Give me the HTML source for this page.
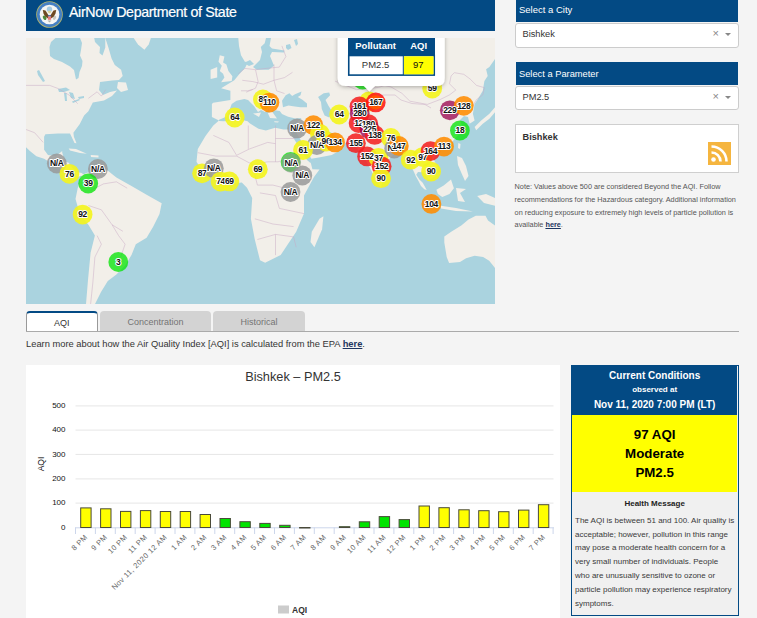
<!DOCTYPE html>
<html><head><meta charset="utf-8">
<style>
*{margin:0;padding:0;box-sizing:border-box}
html,body{width:757px;height:618px;overflow:hidden;background:#f4f4f4;font-family:"Liberation Sans",sans-serif;color:#333}
.abs{position:absolute}
#hdr{left:26px;top:0;width:469px;height:31px;background:#034a84}
#hdr .t{position:absolute;left:43px;top:2.5px;font-size:14.2px;letter-spacing:-0.35px;color:#fff;line-height:18px;white-space:nowrap;-webkit-text-stroke:0.2px #fff}
#map{left:26px;top:38px;width:469px;height:266px;overflow:hidden;background:#aad3df}
.sh{left:516px;width:222px;height:22px;background:#034a84;color:#fff;font-size:9.5px;padding-left:3px;line-height:19.5px}
.sb{left:515px;width:224px;height:24.5px;background:#fff;border:1px solid #ccc;border-radius:3px;font-size:9.25px;color:#333;padding-left:6.5px;line-height:20px}
.sb .x{position:absolute;left:196.5px;top:-1.2px;color:#888;font-size:11px}
.sb .ar{position:absolute;left:209px;top:9.3px;width:0;height:0;border-left:3.2px solid transparent;border-right:3.2px solid transparent;border-top:3.5px solid #888}
#info{left:515px;top:124px;width:224px;height:49px;background:#fff;border:1.5px solid #cfcfcf}
#info .n{position:absolute;left:6.5px;top:6.6px;font-size:9.2px;font-weight:bold;color:#333}
#rss{left:708px;top:142px;width:23px;height:23px;background:#f5b53f}
#note{left:514.6px;top:181px;width:225px;font-size:7.3px;line-height:12.8px;color:#555}
#note b{color:#1d3560;text-decoration:underline}
.tab{top:311px;height:21px;font-size:9px;text-align:center;line-height:20px;border-radius:4px 4px 0 0}
#t1{left:26px;width:71.5px;background:#fff;border:1px solid #999;border-top:2px solid #034a84;border-bottom:none;color:#333}
#t2{left:100px;width:111px;background:#d3d3d3;color:#737373;line-height:23.5px}
#t3{left:213px;width:92px;background:#d3d3d3;color:#737373;line-height:23.5px}
#tline{left:26px;top:331px;width:713px;height:1px;background:#aaa}
#learn{left:26px;top:338.6px;font-size:9.33px;line-height:11px;color:#333;white-space:nowrap}
#learn u{color:#1d3560;font-weight:bold}
#chart{left:26px;top:365px;width:533.5px;height:253px;background:#fff}
#cc{left:571px;top:365px;width:168.3px;height:251px;border:1.5px solid #034a84;background:#f0f0f0}
#cch{position:absolute;left:0;top:0;width:165.3px;height:49px;background:#034a84;color:#fff;text-align:center;font-weight:bold}
#ccy{position:absolute;left:0;top:49px;width:165.3px;height:77px;background:#ff0;text-align:center;color:#000;font-size:13.3px;font-weight:bold;line-height:18.9px;padding-top:11.1px}
#hm{position:absolute;left:0;top:126px;width:165.3px;text-align:center;font-weight:bold;font-size:8px;color:#222;padding-top:6.5px}
#hmt{position:absolute;left:3px;top:147.6px;width:166px;white-space:nowrap;font-size:8px;line-height:13.9px;color:#3a3a3a}
</style></head><body>
<div id="hdr" class="abs">
<svg class="abs" style="left:10px;top:1px" width="28" height="28" viewBox="0 0 28 28">
<circle cx="13.5" cy="13.5" r="13.3" fill="#b5b66c"/>
<circle cx="13.5" cy="13.5" r="12.5" fill="#4580c4"/>
<circle cx="13.5" cy="13.5" r="9.8" fill="#f6f6f4"/>
<circle cx="13.5" cy="8.3" r="2.7" fill="#a6cce4"/>
<path d="M6.8 9 L9.5 9.4 L12.6 14.5 L12.2 17.5 L9.2 15.8 L7.5 12.5Z" fill="#6e4a22"/>
<path d="M20.2 9 L17.5 9.4 L14.4 14.5 L14.8 17.5 L17.8 15.8 L19.5 12.5Z" fill="#6e4a22"/>
<path d="M11.5 11 L13.5 12.5 L15.5 11 L14.5 9.8 L12.5 9.8Z" fill="#d8d49a"/>
<rect x="11.9" y="14.2" width="3.2" height="1.3" fill="#3d5c9c"/>
<rect x="11.9" y="15.5" width="3.2" height="3.3" fill="#e67a7a"/>
<ellipse cx="8.6" cy="16.8" rx="1.6" ry="2.4" fill="#4e8a3c" transform="rotate(-30 8.6 16.8)"/>
<ellipse cx="18.6" cy="16.8" rx="1.4" ry="2.2" fill="#c8c8c0" transform="rotate(30 18.6 16.8)"/>
<path d="M11.5 19.5 L13.5 21.5 L15.5 19.5Z" fill="#b0b0a8"/>
</svg>
<div class="t">AirNow Department of State</div>
</div>
<div id="map" class="abs"><svg width="469" height="266" viewBox="26 38 469 266" style="display:block"><path d="M26.0 38.0 L105.3 38.0 L108.4 47.5 L111.6 58.6 L114.8 65.0 L121.1 69.7 L122.7 76.0 L119.0 80.0 L112.0 80.5 L100.0 82.0 L99.0 90.0 L103.0 95.0 L110.0 92.0 L117.0 90.5 L112.0 96.0 L104.0 100.4 L92.8 102.6 L88.4 111.2 L84.1 115.5 L79.8 124.1 L73.4 132.7 L73.9 136.8 L76.5 143.3 L74.5 143.0 L70.0 133.5 L58.0 133.5 L45.4 134.2 L44.1 136.8 L44.1 149.8 L48.0 155.0 L55.8 156.2 L62.2 151.1 L62.2 152.4 L64.8 161.4 L68.7 162.7 L75.2 171.8 L81.7 173.1 L84.0 175.0 L80.4 176.0 L77.8 177.0 L67.4 174.4 L59.7 167.9 L50.6 162.7 L44.1 158.8 L36.4 156.2 L29.9 151.1 L26.0 147.2Z" fill="#f2efe9"/>
<path d="M49.5 47.0 L51.0 42.0 L55.5 38.0 L80.0 38.0 L82.0 43.0 L81.0 50.0 L80.0 55.4 L82.5 61.0 L82.0 66.0 L79.5 72.0 L78.5 78.0 L76.0 79.5 L74.0 70.0 L70.0 66.5 L62.0 62.0 L54.0 59.0 L50.0 56.0Z" fill="#aad3df"/>
<path d="M94.2 38.0 L105.3 38.0 L105.3 47.5 L102.5 55.4 L99.5 53.0 L100.0 47.0 L95.0 42.0Z" fill="#aad3df"/>
<path d="M37.0 71.0 L39.0 70.0 L45.0 81.0 L43.0 82.0 L38.0 75.0Z" fill="#aad3df"/>
<path d="M118.0 82.0 L126.0 82.5 L128.0 90.0 L121.0 92.0 L117.0 88.0Z" fill="#f2efe9"/>
<path d="M58.0 89.0 L66.0 87.5 L70.0 90.0 L64.0 92.0 L59.0 92.0Z" fill="#aad3df"/>
<path d="M64.0 93.0 L66.5 93.0 L67.0 101.0 L65.0 101.0Z" fill="#aad3df"/>
<path d="M69.0 92.0 L73.0 93.0 L75.0 99.0 L71.0 98.0Z" fill="#aad3df"/>
<path d="M72.0 101.5 L79.0 99.0 L80.0 100.0 L73.0 103.0Z" fill="#aad3df"/>
<path d="M78.0 97.0 L84.0 96.0 L84.0 98.0 L79.0 99.0Z" fill="#aad3df"/>
<path d="M77.7 188.2 L81.7 175.0 L88.0 172.5 L95.9 171.8 L106.0 169.2 L116.4 177.5 L131.5 186.0 L146.6 194.7 L161.7 203.3 L159.5 214.0 L153.0 227.0 L146.6 237.8 L135.8 244.2 L131.5 255.0 L125.0 265.7 L116.4 274.4 L107.8 281.0 L101.0 292.0 L95.0 304.0 L86.0 304.0 L88.0 280.0 L90.6 252.8 L94.9 235.6 L88.4 224.8 L79.8 214.0 L75.5 199.0Z" fill="#f2efe9"/>
<path d="M133.7 38.0 L150.9 38.0 L148.7 44.5 L144.4 49.8 L138.0 44.5Z" fill="#f2efe9"/>
<path d="M238.3 38.0 L495.0 38.0 L495.0 59.0 L489.4 67.0 L486.1 69.3 L487.7 75.9 L484.4 80.9 L482.8 90.7 L477.9 99.0 L474.6 104.0 L472.9 113.8 L474.6 120.4 L469.6 123.7 L468.0 117.1 L464.0 116.0 L460.0 120.0 L462.0 126.0 L459.0 134.0 L452.0 142.0 L443.0 148.0 L437.0 154.0 L433.5 159.1 L437.9 167.9 L435.0 176.6 L429.1 179.5 L423.3 172.3 L418.0 172.0 L416.2 174.7 L419.4 179.6 L422.7 182.8 L425.9 188.5 L426.7 190.1 L424.3 189.3 L421.0 186.0 L418.6 181.2 L415.8 176.3 L414.0 172.0 L413.0 170.0 L410.0 165.0 L404.0 156.0 L397.0 151.0 L390.0 158.0 L385.0 170.0 L381.0 188.0 L376.0 180.0 L370.0 168.0 L364.0 157.0 L357.0 148.0 L348.0 141.0 L345.0 143.3 L340.8 149.8 L331.8 155.0 L318.8 157.5 L309.8 159.0 L312.4 169.2 L319.5 169.6 L314.0 177.0 L304.0 195.5 L304.0 213.6 L296.2 231.8 L288.0 244.0 L280.7 255.0 L265.1 262.8 L260.0 260.3 L254.8 239.5 L250.9 218.8 L252.2 198.0 L247.0 187.7 L241.8 182.5 L228.9 183.8 L215.9 180.0 L203.0 172.2 L196.5 161.8 L197.8 148.9 L205.5 135.9 L213.3 125.5 L219.0 120.5 L211.9 117.0 L211.9 104.0 L213.2 102.7 L230.4 100.1 L230.4 90.8 L221.1 88.2 L234.3 80.3 L239.6 73.7 L245.0 68.0 L248.0 62.0 L244.9 61.8 L241.0 55.2 L239.0 45.9Z" fill="#f2efe9"/>
<path d="M244.0 63.0 L250.0 60.0 L254.0 64.0 L249.0 66.0Z" fill="#aad3df"/>
<path d="M266.0 38.0 L271.0 38.0 L269.5 46.0 L272.0 48.5 L284.5 50.5 L284.0 52.5 L272.0 52.0 L270.0 56.0 L274.0 65.7 L268.7 69.7 L256.8 69.7 L253.0 67.0 L260.0 60.0 L262.0 52.0 L260.8 47.0 L264.7 43.3Z" fill="#aad3df"/>
<path d="M219.0 119.7 L227.0 116.5 L231.7 103.9 L236.5 100.7 L244.4 99.1 L250.7 100.7 L257.1 105.4 L263.4 108.6 L268.2 108.6 L270.0 113.0 L273.0 110.0 L279.8 111.1 L282.0 114.0 L288.1 116.7 L295.5 118.5 L301.5 118.0 L296.0 124.0 L294.6 127.0 L291.8 129.6 L283.5 129.6 L275.2 127.8 L265.9 130.5 L258.5 128.7 L249.3 123.1 L247.6 121.3 L241.2 119.7 L223.8 121.3 L219.0 121.0Z" fill="#aad3df"/>
<path d="M247.0 98.0 L256.0 100.0 L266.0 107.0 L269.0 110.0 L265.0 112.0 L261.0 110.0 L258.0 112.0 L254.0 106.0 L249.0 101.0Z" fill="#f2efe9"/>
<path d="M253.0 113.5 L261.0 112.5 L259.0 117.0Z" fill="#f2efe9"/>
<path d="M267.8 113.0 L272.0 111.5 L277.0 118.5 L270.0 118.0Z" fill="#f2efe9"/>
<path d="M274.2 121.3 L278.9 121.5 L278.0 122.4 L274.5 122.2Z" fill="#f2efe9"/>
<path d="M286.0 45.0 L290.0 44.0 L291.5 48.0 L288.0 50.0 L286.0 48.0Z" fill="#aad3df"/>
<path d="M294.0 40.0 L297.0 39.0 L298.0 44.0 L296.0 46.0Z" fill="#aad3df"/>
<path d="M282.0 100.7 L285.7 95.2 L289.4 93.3 L292.2 96.1 L295.0 94.3 L301.5 91.5 L300.5 95.2 L297.8 97.0 L302.4 99.8 L307.0 103.5 L307.0 107.2 L300.5 107.2 L293.1 106.3 L288.5 105.4 L283.0 107.2Z" fill="#aad3df"/>
<path d="M318.1 97.0 L323.7 93.3 L329.2 92.4 L330.1 95.2 L325.5 100.0 L328.3 105.4 L332.9 112.8 L329.2 117.4 L324.6 115.5 L321.8 109.0 L321.0 102.0Z" fill="#aad3df"/>
<path d="M291.0 130.0 L295.0 130.0 L312.0 160.0 L310.5 163.0 L307.0 160.0 L291.0 134.0Z" fill="#aad3df"/>
<path d="M325.0 130.0 L332.0 133.0 L342.0 142.0 L338.0 144.0 L330.0 140.0Z" fill="#aad3df"/>
<path d="M219.8 55.2 L224.4 56.5 L223.1 62.4 L226.4 64.4 L228.4 71.0 L232.4 76.3 L231.7 80.9 L221.1 82.3 L224.4 77.6 L223.1 73.7 L219.8 71.0 L221.8 65.7 L218.5 61.8Z" fill="#f2efe9"/>
<path d="M210.6 69.7 L217.2 67.1 L217.2 77.6 L210.6 79.0Z" fill="#f2efe9"/>
<path d="M319.5 218.8 L323.4 216.2 L322.1 229.2 L314.4 247.3 L310.5 242.1 L311.8 231.8Z" fill="#f2efe9"/>
<path d="M495.0 112.2 L489.4 118.8 L482.8 123.7 L476.2 130.3 L474.6 127.0 L481.2 120.4 L489.4 113.8 L495.0 107.2Z" fill="#f2efe9"/>
<path d="M458.3 143.1 L460.5 144.0 L460.0 149.0 L458.0 148.0Z" fill="#f2efe9"/>
<path d="M457.0 156.0 L462.0 158.0 L466.0 166.0 L468.5 176.0 L465.0 181.0 L461.0 172.0 L458.0 165.0Z" fill="#f2efe9"/>

<path d="M436.4 189.7 L443.7 185.4 L451.0 179.5 L453.9 188.3 L449.5 194.1 L442.3 197.0 L437.9 194.1Z" fill="#f2efe9"/>
<path d="M456.0 188.0 L466.0 189.0 L460.0 193.0 L465.0 202.0 L458.0 201.0Z" fill="#f2efe9"/>
<path d="M440.8 205.8 L456.0 208.0 L472.9 211.6 L456.0 211.0 L441.0 208.5Z" fill="#f2efe9"/>
<path d="M477.2 196.0 L486.0 194.1 L495.0 198.0 L495.0 205.8 L484.0 203.0Z" fill="#f2efe9"/>
<path d="M68.7 148.5 L76.0 149.0 L86.8 153.7 L80.0 153.0 L70.0 150.5Z" fill="#f2efe9"/>
<path d="M90.7 155.0 L98.5 155.5 L98.5 157.5 L91.0 157.0Z" fill="#f2efe9"/>
<path d="M444.3 236.4 L451.6 231.6 L461.3 225.5 L468.5 219.4 L475.8 215.8 L485.5 215.8 L488.0 220.6 L495.0 225.5 L495.0 268.0 L489.2 260.7 L483.1 257.0 L474.6 255.8 L466.1 258.3 L460.0 261.9 L449.1 263.1 L446.7 257.0 L444.3 242.5Z" fill="#f2efe9"/>
<path d="M213.3 135.4 L228.9 142.4 L236.6 155.3" fill="none" stroke="#c9a9c4" stroke-width="0.6" stroke-opacity="0.8"/>
<path d="M236.6 155.3 L249.6 148.9 L267.7 142.4 L275.5 143.7" fill="none" stroke="#c9a9c4" stroke-width="0.6" stroke-opacity="0.8"/>
<path d="M248.3 125.5 L248.3 148.9" fill="none" stroke="#c9a9c4" stroke-width="0.6" stroke-opacity="0.8"/>
<path d="M275.5 125.5 L275.5 161.8" fill="none" stroke="#c9a9c4" stroke-width="0.6" stroke-opacity="0.8"/>
<path d="M275.5 138.5 L296.2 138.5" fill="none" stroke="#c9a9c4" stroke-width="0.6" stroke-opacity="0.8"/>
<path d="M197.8 152.7 L215.9 156.1 L236.6 156.1" fill="none" stroke="#c9a9c4" stroke-width="0.6" stroke-opacity="0.8"/>
<path d="M236.6 156.1 L252.2 164.4 L267.7 161.8 L278.1 161.8 L293.6 156.6" fill="none" stroke="#c9a9c4" stroke-width="0.6" stroke-opacity="0.8"/>
<path d="M252.2 164.4 L257.4 185.1 L272.9 185.1 L283.3 187.7 L298.8 192.9" fill="none" stroke="#c9a9c4" stroke-width="0.6" stroke-opacity="0.8"/>
<path d="M259.9 192.9 L275.5 195.5 L279.4 208.4 L304.0 213.6" fill="none" stroke="#c9a9c4" stroke-width="0.6" stroke-opacity="0.8"/>
<path d="M254.8 218.8 L272.9 224.0 L293.6 226.6" fill="none" stroke="#c9a9c4" stroke-width="0.6" stroke-opacity="0.8"/>
<path d="M257.4 239.5 L275.5 234.4 L293.6 236.9 L296.2 247.3" fill="none" stroke="#c9a9c4" stroke-width="0.6" stroke-opacity="0.8"/>
<path d="M275.5 234.4 L275.5 255.1" fill="none" stroke="#c9a9c4" stroke-width="0.6" stroke-opacity="0.8"/>
<path d="M26.0 85.4 L49.7 85.4 L58.3 88.6 L69.1 95.1 L77.7 103.7" fill="none" stroke="#c9a9c4" stroke-width="0.6" stroke-opacity="0.8"/>
<path d="M88.4 98.3 L97.1 91.8 L101.4 96.1 L105.7 89.7" fill="none" stroke="#c9a9c4" stroke-width="0.6" stroke-opacity="0.8"/>
<path d="M26.0 129.5 L34.6 132.7 L43.2 142.4" fill="none" stroke="#c9a9c4" stroke-width="0.6" stroke-opacity="0.8"/>
<path d="M90.6 190.4 L103.5 183.9 L116.4 181.8 L127.2 188.2" fill="none" stroke="#c9a9c4" stroke-width="0.6" stroke-opacity="0.8"/>
<path d="M88.4 205.5 L101.4 209.8 L112.1 224.8 L118.6 235.6 L125.1 244.2 L120.7 257.1" fill="none" stroke="#c9a9c4" stroke-width="0.6" stroke-opacity="0.8"/>
<path d="M97.1 235.6 L101.4 244.2 L94.9 257.1 L92.8 283.0 L90.6 304.1" fill="none" stroke="#c9a9c4" stroke-width="0.6" stroke-opacity="0.8"/>
<path d="M112.1 224.8 L122.9 231.3" fill="none" stroke="#c9a9c4" stroke-width="0.6" stroke-opacity="0.8"/>
<path d="M238.3 73.7 L244.9 68.4 L255.5 69.7 L266.1 68.4 L279.3 67.1 L285.9 56.5 L281.9 45.9" fill="none" stroke="#c9a9c4" stroke-width="0.6" stroke-opacity="0.8"/>
<path d="M242.3 80.3 L252.8 81.6 L263.4 84.2 L274.0 80.3 L284.5 77.6 L292.5 72.3" fill="none" stroke="#c9a9c4" stroke-width="0.6" stroke-opacity="0.8"/>
<path d="M255.5 69.7 L258.1 81.6 L255.5 88.2 L246.2 92.2" fill="none" stroke="#c9a9c4" stroke-width="0.6" stroke-opacity="0.8"/>
<path d="M274.0 64.4 L274.0 80.3 L276.6 90.8 L284.5 93.5" fill="none" stroke="#c9a9c4" stroke-width="0.6" stroke-opacity="0.8"/>
<path d="M241.0 90.8 L247.6 90.8 L252.8 89.5" fill="none" stroke="#c9a9c4" stroke-width="0.6" stroke-opacity="0.8"/>
<path d="M335.0 81.1 L356.5 89.7 L378.1 87.5 L399.6 81.1" fill="none" stroke="#c9a9c4" stroke-width="0.6" stroke-opacity="0.8"/>
<path d="M375.0 83.8 L390.9 86.9 L401.9 93.3 L409.9 101.2 L427.3 104.4 L440.0 99.6 L449.5 94.9 L455.8 90.1 L449.5 83.8 L451.1 75.9 L454.3 72.7 L463.8 74.3 L470.1 79.0 L476.5 85.4 L484.4 87.7 L482.8 94.9 L476.5 99.6 L471.7 107.6" fill="none" stroke="#c9a9c4" stroke-width="0.6" stroke-opacity="0.8"/>
<path d="M375.0 95.0 L395.0 95.0 L401.0 100.0 L412.0 103.5 L425.0 104.5 L431.0 108.0" fill="none" stroke="#c9a9c4" stroke-width="0.6" stroke-opacity="0.8"/>
<circle cx="56.8" cy="163.5" r="9.9" fill="#999999" fill-opacity="0.85"/>
<circle cx="69.4" cy="173.8" r="9.9" fill="#f4f41c" fill-opacity="0.9"/>
<circle cx="97.9" cy="169" r="9.9" fill="#999999" fill-opacity="0.85"/>
<circle cx="88.2" cy="183.5" r="9.9" fill="#00e400" fill-opacity="0.75"/>
<circle cx="82.6" cy="214.6" r="9.9" fill="#f4f41c" fill-opacity="0.9"/>
<circle cx="118.3" cy="262" r="9.9" fill="#00e400" fill-opacity="0.75"/>
<circle cx="234.7" cy="117.5" r="9.9" fill="#f4f41c" fill-opacity="0.9"/>
<circle cx="262.9" cy="99.4" r="9.9" fill="#f4f41c" fill-opacity="0.9"/>
<circle cx="269.4" cy="102.6" r="9.9" fill="#ff8c00" fill-opacity="0.88"/>
<circle cx="202.1" cy="173.3" r="9.9" fill="#f4f41c" fill-opacity="0.9"/>
<circle cx="213.8" cy="168.3" r="9.9" fill="#999999" fill-opacity="0.85"/>
<circle cx="220.6" cy="181.6" r="9.9" fill="#f4f41c" fill-opacity="0.9"/>
<circle cx="229.3" cy="181.4" r="9.9" fill="#f4f41c" fill-opacity="0.9"/>
<circle cx="257.8" cy="169.2" r="9.9" fill="#f4f41c" fill-opacity="0.9"/>
<circle cx="297.1" cy="128.4" r="9.9" fill="#999999" fill-opacity="0.85"/>
<circle cx="313.4" cy="125.2" r="9.9" fill="#ff8c00" fill-opacity="0.88"/>
<circle cx="319.9" cy="133.8" r="9.9" fill="#f4f41c" fill-opacity="0.9"/>
<circle cx="316.9" cy="145" r="9.9" fill="#999999" fill-opacity="0.85"/>
<circle cx="326" cy="141.5" r="9.9" fill="#f4f41c" fill-opacity="0.9"/>
<circle cx="335" cy="142.4" r="9.9" fill="#ff8c00" fill-opacity="0.88"/>
<circle cx="303" cy="150" r="9.9" fill="#f4f41c" fill-opacity="0.9"/>
<circle cx="290.6" cy="162" r="9.9" fill="#00e400" fill-opacity="0.75"/>
<circle cx="291.2" cy="162.8" r="9.9" fill="#999999" fill-opacity="0.6"/>
<circle cx="302.3" cy="175.5" r="9.9" fill="#999999" fill-opacity="0.85"/>
<circle cx="290.5" cy="192" r="9.9" fill="#999999" fill-opacity="0.85"/>
<circle cx="339.2" cy="114.5" r="9.9" fill="#f4f41c" fill-opacity="0.9"/>
<circle cx="362.5" cy="79.5" r="9.9" fill="#00e400" fill-opacity="0.75"/>
<circle cx="369" cy="101.5" r="9.9" fill="#f4f41c" fill-opacity="0.9"/>
<circle cx="359.5" cy="106.5" r="9.9" fill="#f41c1c" fill-opacity="0.85"/>
<circle cx="375.7" cy="102.4" r="9.9" fill="#ff1010" fill-opacity="0.85"/>
<circle cx="375.7" cy="102.4" r="7.2" fill="#ff5a00" fill-opacity="0.9"/>
<circle cx="359.7" cy="113.4" r="9.9" fill="#99004c" fill-opacity="0.75"/>
<circle cx="358.6" cy="123" r="9.9" fill="#f41c1c" fill-opacity="0.85"/>
<circle cx="368.3" cy="124.1" r="9.9" fill="#f41c1c" fill-opacity="0.85"/>
<circle cx="369.5" cy="129.3" r="9.9" fill="#99004c" fill-opacity="0.75"/>
<circle cx="374.7" cy="134.9" r="9.9" fill="#f41c1c" fill-opacity="0.85"/>
<circle cx="355.9" cy="143.2" r="9.9" fill="#f41c1c" fill-opacity="0.85"/>
<circle cx="367.1" cy="156.4" r="9.9" fill="#f41c1c" fill-opacity="0.85"/>
<circle cx="378.5" cy="157.8" r="9.9" fill="#f4f41c" fill-opacity="0.9"/>
<circle cx="381.6" cy="166.3" r="9.9" fill="#f41c1c" fill-opacity="0.85"/>
<circle cx="381" cy="178.2" r="9.9" fill="#f4f41c" fill-opacity="0.9"/>
<circle cx="390.9" cy="137.9" r="9.9" fill="#f4f41c" fill-opacity="0.9"/>
<circle cx="394.2" cy="148.5" r="9.9" fill="#999999" fill-opacity="0.85"/>
<circle cx="398.8" cy="145.9" r="9.9" fill="#ff8c00" fill-opacity="0.88"/>
<circle cx="410.7" cy="159.7" r="9.9" fill="#f4f41c" fill-opacity="0.9"/>
<circle cx="422.6" cy="157.1" r="9.9" fill="#f4f41c" fill-opacity="0.9"/>
<circle cx="430.5" cy="151.1" r="9.9" fill="#f41c1c" fill-opacity="0.85"/>
<circle cx="431.1" cy="171.6" r="9.9" fill="#f4f41c" fill-opacity="0.9"/>
<circle cx="431.4" cy="203.9" r="9.9" fill="#ff8c00" fill-opacity="0.88"/>
<circle cx="444" cy="146.6" r="9.9" fill="#ff8c00" fill-opacity="0.88"/>
<circle cx="432.2" cy="88.5" r="9.9" fill="#f4f41c" fill-opacity="0.9"/>
<circle cx="449.8" cy="110.3" r="9.9" fill="#99004c" fill-opacity="0.75"/>
<circle cx="463.8" cy="105.8" r="9.9" fill="#ff8c00" fill-opacity="0.88"/>
<circle cx="459.9" cy="130.5" r="9.9" fill="#00e400" fill-opacity="0.75"/>
<text x="56.8" y="166.3" text-anchor="middle" font-size="8.5" letter-spacing="-0.35" font-weight="bold" fill="#111" stroke="#fff" stroke-width="2" stroke-linejoin="round" paint-order="stroke">N/A</text>
<text x="69.4" y="176.6" text-anchor="middle" font-size="8.5" letter-spacing="-0.35" font-weight="bold" fill="#111" stroke="#fff" stroke-width="2" stroke-linejoin="round" paint-order="stroke">76</text>
<text x="97.9" y="171.8" text-anchor="middle" font-size="8.5" letter-spacing="-0.35" font-weight="bold" fill="#111" stroke="#fff" stroke-width="2" stroke-linejoin="round" paint-order="stroke">N/A</text>
<text x="88.2" y="186.3" text-anchor="middle" font-size="8.5" letter-spacing="-0.35" font-weight="bold" fill="#111" stroke="#fff" stroke-width="2" stroke-linejoin="round" paint-order="stroke">39</text>
<text x="82.6" y="217.4" text-anchor="middle" font-size="8.5" letter-spacing="-0.35" font-weight="bold" fill="#111" stroke="#fff" stroke-width="2" stroke-linejoin="round" paint-order="stroke">92</text>
<text x="118.3" y="264.8" text-anchor="middle" font-size="8.5" letter-spacing="-0.35" font-weight="bold" fill="#111" stroke="#fff" stroke-width="2" stroke-linejoin="round" paint-order="stroke">3</text>
<text x="234.7" y="120.3" text-anchor="middle" font-size="8.5" letter-spacing="-0.35" font-weight="bold" fill="#111" stroke="#fff" stroke-width="2" stroke-linejoin="round" paint-order="stroke">64</text>
<text x="262.9" y="102.2" text-anchor="middle" font-size="8.5" letter-spacing="-0.35" font-weight="bold" fill="#111" stroke="#fff" stroke-width="2" stroke-linejoin="round" paint-order="stroke">86</text>
<text x="269.4" y="105.4" text-anchor="middle" font-size="8.5" letter-spacing="-0.35" font-weight="bold" fill="#111" stroke="#fff" stroke-width="2" stroke-linejoin="round" paint-order="stroke">110</text>
<text x="202.1" y="176.1" text-anchor="middle" font-size="8.5" letter-spacing="-0.35" font-weight="bold" fill="#111" stroke="#fff" stroke-width="2" stroke-linejoin="round" paint-order="stroke">87</text>
<text x="213.8" y="171.1" text-anchor="middle" font-size="8.5" letter-spacing="-0.35" font-weight="bold" fill="#111" stroke="#fff" stroke-width="2" stroke-linejoin="round" paint-order="stroke">N/A</text>
<text x="220.6" y="184.4" text-anchor="middle" font-size="8.5" letter-spacing="-0.35" font-weight="bold" fill="#111" stroke="#fff" stroke-width="2" stroke-linejoin="round" paint-order="stroke">74</text>
<text x="229.3" y="184.2" text-anchor="middle" font-size="8.5" letter-spacing="-0.35" font-weight="bold" fill="#111" stroke="#fff" stroke-width="2" stroke-linejoin="round" paint-order="stroke">69</text>
<text x="257.8" y="172.0" text-anchor="middle" font-size="8.5" letter-spacing="-0.35" font-weight="bold" fill="#111" stroke="#fff" stroke-width="2" stroke-linejoin="round" paint-order="stroke">69</text>
<text x="297.1" y="131.2" text-anchor="middle" font-size="8.5" letter-spacing="-0.35" font-weight="bold" fill="#111" stroke="#fff" stroke-width="2" stroke-linejoin="round" paint-order="stroke">N/A</text>
<text x="313.4" y="128.0" text-anchor="middle" font-size="8.5" letter-spacing="-0.35" font-weight="bold" fill="#111" stroke="#fff" stroke-width="2" stroke-linejoin="round" paint-order="stroke">122</text>
<text x="319.9" y="136.6" text-anchor="middle" font-size="8.5" letter-spacing="-0.35" font-weight="bold" fill="#111" stroke="#fff" stroke-width="2" stroke-linejoin="round" paint-order="stroke">68</text>
<text x="316.9" y="147.8" text-anchor="middle" font-size="8.5" letter-spacing="-0.35" font-weight="bold" fill="#111" stroke="#fff" stroke-width="2" stroke-linejoin="round" paint-order="stroke">N/A</text>
<text x="326" y="144.3" text-anchor="middle" font-size="8.5" letter-spacing="-0.35" font-weight="bold" fill="#111" stroke="#fff" stroke-width="2" stroke-linejoin="round" paint-order="stroke">96</text>
<text x="335" y="145.2" text-anchor="middle" font-size="8.5" letter-spacing="-0.35" font-weight="bold" fill="#111" stroke="#fff" stroke-width="2" stroke-linejoin="round" paint-order="stroke">134</text>
<text x="303" y="152.8" text-anchor="middle" font-size="8.5" letter-spacing="-0.35" font-weight="bold" fill="#111" stroke="#fff" stroke-width="2" stroke-linejoin="round" paint-order="stroke">61</text>
<text x="291.2" y="165.6" text-anchor="middle" font-size="8.5" letter-spacing="-0.35" font-weight="bold" fill="#111" stroke="#fff" stroke-width="2" stroke-linejoin="round" paint-order="stroke">N/A</text>
<text x="302.3" y="178.3" text-anchor="middle" font-size="8.5" letter-spacing="-0.35" font-weight="bold" fill="#111" stroke="#fff" stroke-width="2" stroke-linejoin="round" paint-order="stroke">N/A</text>
<text x="290.5" y="194.8" text-anchor="middle" font-size="8.5" letter-spacing="-0.35" font-weight="bold" fill="#111" stroke="#fff" stroke-width="2" stroke-linejoin="round" paint-order="stroke">N/A</text>
<text x="339.2" y="117.3" text-anchor="middle" font-size="8.5" letter-spacing="-0.35" font-weight="bold" fill="#111" stroke="#fff" stroke-width="2" stroke-linejoin="round" paint-order="stroke">64</text>
<text x="359.5" y="109.3" text-anchor="middle" font-size="8.5" letter-spacing="-0.35" font-weight="bold" fill="#111" stroke="#fff" stroke-width="2" stroke-linejoin="round" paint-order="stroke">161</text>
<text x="375.7" y="105.2" text-anchor="middle" font-size="8.5" letter-spacing="-0.35" font-weight="bold" fill="#111" stroke="#fff" stroke-width="2" stroke-linejoin="round" paint-order="stroke">167</text>
<text x="359.7" y="116.2" text-anchor="middle" font-size="8.5" letter-spacing="-0.35" font-weight="bold" fill="#111" stroke="#fff" stroke-width="2" stroke-linejoin="round" paint-order="stroke">280</text>
<text x="358.6" y="125.8" text-anchor="middle" font-size="8.5" letter-spacing="-0.35" font-weight="bold" fill="#111" stroke="#fff" stroke-width="2" stroke-linejoin="round" paint-order="stroke">12</text>
<text x="368.3" y="126.9" text-anchor="middle" font-size="8.5" letter-spacing="-0.35" font-weight="bold" fill="#111" stroke="#fff" stroke-width="2" stroke-linejoin="round" paint-order="stroke">180</text>
<text x="369.5" y="132.1" text-anchor="middle" font-size="8.5" letter-spacing="-0.35" font-weight="bold" fill="#111" stroke="#fff" stroke-width="2" stroke-linejoin="round" paint-order="stroke">225</text>
<text x="374.7" y="137.7" text-anchor="middle" font-size="8.5" letter-spacing="-0.35" font-weight="bold" fill="#111" stroke="#fff" stroke-width="2" stroke-linejoin="round" paint-order="stroke">138</text>
<text x="355.9" y="146.0" text-anchor="middle" font-size="8.5" letter-spacing="-0.35" font-weight="bold" fill="#111" stroke="#fff" stroke-width="2" stroke-linejoin="round" paint-order="stroke">155</text>
<text x="367.1" y="159.2" text-anchor="middle" font-size="8.5" letter-spacing="-0.35" font-weight="bold" fill="#111" stroke="#fff" stroke-width="2" stroke-linejoin="round" paint-order="stroke">152</text>
<text x="378.5" y="160.6" text-anchor="middle" font-size="8.5" letter-spacing="-0.35" font-weight="bold" fill="#111" stroke="#fff" stroke-width="2" stroke-linejoin="round" paint-order="stroke">37</text>
<text x="381.6" y="169.1" text-anchor="middle" font-size="8.5" letter-spacing="-0.35" font-weight="bold" fill="#111" stroke="#fff" stroke-width="2" stroke-linejoin="round" paint-order="stroke">152</text>
<text x="381" y="181.0" text-anchor="middle" font-size="8.5" letter-spacing="-0.35" font-weight="bold" fill="#111" stroke="#fff" stroke-width="2" stroke-linejoin="round" paint-order="stroke">90</text>
<text x="390.9" y="140.7" text-anchor="middle" font-size="8.5" letter-spacing="-0.35" font-weight="bold" fill="#111" stroke="#fff" stroke-width="2" stroke-linejoin="round" paint-order="stroke">76</text>
<text x="394.2" y="151.3" text-anchor="middle" font-size="8.5" letter-spacing="-0.35" font-weight="bold" fill="#111" stroke="#fff" stroke-width="2" stroke-linejoin="round" paint-order="stroke">N/A</text>
<text x="398.8" y="148.7" text-anchor="middle" font-size="8.5" letter-spacing="-0.35" font-weight="bold" fill="#111" stroke="#fff" stroke-width="2" stroke-linejoin="round" paint-order="stroke">147</text>
<text x="410.7" y="162.5" text-anchor="middle" font-size="8.5" letter-spacing="-0.35" font-weight="bold" fill="#111" stroke="#fff" stroke-width="2" stroke-linejoin="round" paint-order="stroke">92</text>
<text x="422.6" y="159.9" text-anchor="middle" font-size="8.5" letter-spacing="-0.35" font-weight="bold" fill="#111" stroke="#fff" stroke-width="2" stroke-linejoin="round" paint-order="stroke">97</text>
<text x="430.5" y="153.9" text-anchor="middle" font-size="8.5" letter-spacing="-0.35" font-weight="bold" fill="#111" stroke="#fff" stroke-width="2" stroke-linejoin="round" paint-order="stroke">164</text>
<text x="431.1" y="174.4" text-anchor="middle" font-size="8.5" letter-spacing="-0.35" font-weight="bold" fill="#111" stroke="#fff" stroke-width="2" stroke-linejoin="round" paint-order="stroke">90</text>
<text x="431.4" y="206.7" text-anchor="middle" font-size="8.5" letter-spacing="-0.35" font-weight="bold" fill="#111" stroke="#fff" stroke-width="2" stroke-linejoin="round" paint-order="stroke">104</text>
<text x="444" y="149.4" text-anchor="middle" font-size="8.5" letter-spacing="-0.35" font-weight="bold" fill="#111" stroke="#fff" stroke-width="2" stroke-linejoin="round" paint-order="stroke">113</text>
<text x="432.2" y="91.3" text-anchor="middle" font-size="8.5" letter-spacing="-0.35" font-weight="bold" fill="#111" stroke="#fff" stroke-width="2" stroke-linejoin="round" paint-order="stroke">59</text>
<text x="449.8" y="113.1" text-anchor="middle" font-size="8.5" letter-spacing="-0.35" font-weight="bold" fill="#111" stroke="#fff" stroke-width="2" stroke-linejoin="round" paint-order="stroke">229</text>
<text x="463.8" y="108.6" text-anchor="middle" font-size="8.5" letter-spacing="-0.35" font-weight="bold" fill="#111" stroke="#fff" stroke-width="2" stroke-linejoin="round" paint-order="stroke">128</text>
<text x="459.9" y="133.3" text-anchor="middle" font-size="8.5" letter-spacing="-0.35" font-weight="bold" fill="#111" stroke="#fff" stroke-width="2" stroke-linejoin="round" paint-order="stroke">18</text><defs><filter id="ps" x="-20%" y="-20%" width="140%" height="140%"><feDropShadow dx="0" dy="1" stdDeviation="2" flood-color="#000" flood-opacity="0.3"/></filter></defs><path filter="url(#ps)" d="M345.7 30 H436.7 Q444.7 30 444.7 38 V78.1 Q444.7 86.1 436.7 86.1 H375 L369.4 91.6 L363.8 86.1 H345.7 Q337.7 86.1 337.7 78.1 V38 Q337.7 30 345.7 30Z" fill="#fff"/>
<rect x="348" y="30" width="87" height="25.5" fill="#034a84"/>
<rect x="348.75" y="55.5" width="85.5" height="19.6" fill="#fff" stroke="#034a84" stroke-width="1.6"/>
<rect x="403.8" y="56.3" width="29.7" height="18" fill="#ff0"/>
<line x1="403.3" y1="55.5" x2="403.3" y2="75" stroke="#034a84" stroke-width="1"/>
<text x="375.6" y="48.9" text-anchor="middle" font-size="9.5" font-weight="bold" fill="#fff">Pollutant</text>
<text x="418.7" y="48.9" text-anchor="middle" font-size="9.5" font-weight="bold" fill="#fff">AQI</text>
<text x="375.6" y="67.9" text-anchor="middle" font-size="9.5" fill="#333">PM2.5</text>
<text x="418.3" y="67.9" text-anchor="middle" font-size="9.5" fill="#111">97</text></svg></div>
<div class="sh abs" style="top:0">Select a City</div>
<div class="sb abs" style="top:23px">Bishkek<span class="x">×</span><span class="ar"></span></div>
<div class="sh abs" style="top:62px;height:23px;line-height:24.5px;font-size:9.3px">Select a Parameter</div>
<div class="sb abs" style="top:85.8px">PM2.5<span class="x">×</span><span class="ar"></span></div>
<div id="info" class="abs"><div class="n">Bishkek</div></div>
<div id="rss" class="abs"><svg width="23" height="23" viewBox="0 0 23 23"><circle cx="5.5" cy="17.5" r="2.3" fill="#fff"/><path d="M3.5 10.5 A9 9 0 0 1 12.5 19.5" stroke="#fff" stroke-width="2.6" fill="none"/><path d="M3.5 4.5 A15 15 0 0 1 18.5 19.5" stroke="#fff" stroke-width="2.6" fill="none"/></svg></div>
<div id="note" class="abs">Note: Values above 500 are considered Beyond the AQI. Follow recommendations for the Hazardous category. Additional information on reducing exposure to extremely high levels of particle pollution is available <b>here</b>.</div>
<div id="t1" class="tab abs">AQI</div>
<div id="t2" class="tab abs">Concentration</div>
<div id="t3" class="tab abs">Historical</div>
<div id="tline" class="abs"></div>
<div id="learn" class="abs">Learn more about how the Air Quality Index [AQI] is calculated from the EPA <u>here</u>.</div>
<div id="chart" class="abs"></div>
<svg class="abs" style="left:0;top:0" width="757" height="618" viewBox="0 0 757 618">
<line x1="75.5" x2="553.5" y1="405.9" y2="405.9" stroke="#e6e6e6" stroke-width="1"/>
<text x="65.5" y="408.2" text-anchor="end" font-size="8" fill="#111">500</text>
<line x1="75.5" x2="553.5" y1="430.1" y2="430.1" stroke="#e6e6e6" stroke-width="1"/>
<text x="65.5" y="432.4" text-anchor="end" font-size="8" fill="#111">400</text>
<line x1="75.5" x2="553.5" y1="454.4" y2="454.4" stroke="#e6e6e6" stroke-width="1"/>
<text x="65.5" y="456.7" text-anchor="end" font-size="8" fill="#111">300</text>
<line x1="75.5" x2="553.5" y1="478.9" y2="478.9" stroke="#e6e6e6" stroke-width="1"/>
<text x="65.5" y="481.2" text-anchor="end" font-size="8" fill="#111">200</text>
<line x1="75.5" x2="553.5" y1="503.1" y2="503.1" stroke="#e6e6e6" stroke-width="1"/>
<text x="65.5" y="505.4" text-anchor="end" font-size="8" fill="#111">100</text>
<text x="65.5" y="529.8" text-anchor="end" font-size="8" fill="#111">0</text>
<line x1="75.5" x2="75.5" y1="527.5" y2="534" stroke="#ccd6eb" stroke-width="1"/>
<line x1="95.4" x2="95.4" y1="527.5" y2="534" stroke="#ccd6eb" stroke-width="1"/>
<line x1="115.3" x2="115.3" y1="527.5" y2="534" stroke="#ccd6eb" stroke-width="1"/>
<line x1="135.2" x2="135.2" y1="527.5" y2="534" stroke="#ccd6eb" stroke-width="1"/>
<line x1="155.1" x2="155.1" y1="527.5" y2="534" stroke="#ccd6eb" stroke-width="1"/>
<line x1="175.0" x2="175.0" y1="527.5" y2="534" stroke="#ccd6eb" stroke-width="1"/>
<line x1="194.9" x2="194.9" y1="527.5" y2="534" stroke="#ccd6eb" stroke-width="1"/>
<line x1="214.8" x2="214.8" y1="527.5" y2="534" stroke="#ccd6eb" stroke-width="1"/>
<line x1="234.7" x2="234.7" y1="527.5" y2="534" stroke="#ccd6eb" stroke-width="1"/>
<line x1="254.6" x2="254.6" y1="527.5" y2="534" stroke="#ccd6eb" stroke-width="1"/>
<line x1="274.5" x2="274.5" y1="527.5" y2="534" stroke="#ccd6eb" stroke-width="1"/>
<line x1="294.4" x2="294.4" y1="527.5" y2="534" stroke="#ccd6eb" stroke-width="1"/>
<line x1="314.3" x2="314.3" y1="527.5" y2="534" stroke="#ccd6eb" stroke-width="1"/>
<line x1="334.2" x2="334.2" y1="527.5" y2="534" stroke="#ccd6eb" stroke-width="1"/>
<line x1="354.1" x2="354.1" y1="527.5" y2="534" stroke="#ccd6eb" stroke-width="1"/>
<line x1="374.0" x2="374.0" y1="527.5" y2="534" stroke="#ccd6eb" stroke-width="1"/>
<line x1="393.9" x2="393.9" y1="527.5" y2="534" stroke="#ccd6eb" stroke-width="1"/>
<line x1="413.8" x2="413.8" y1="527.5" y2="534" stroke="#ccd6eb" stroke-width="1"/>
<line x1="433.7" x2="433.7" y1="527.5" y2="534" stroke="#ccd6eb" stroke-width="1"/>
<line x1="453.6" x2="453.6" y1="527.5" y2="534" stroke="#ccd6eb" stroke-width="1"/>
<line x1="473.5" x2="473.5" y1="527.5" y2="534" stroke="#ccd6eb" stroke-width="1"/>
<line x1="493.4" x2="493.4" y1="527.5" y2="534" stroke="#ccd6eb" stroke-width="1"/>
<line x1="513.3" x2="513.3" y1="527.5" y2="534" stroke="#ccd6eb" stroke-width="1"/>
<line x1="533.2" x2="533.2" y1="527.5" y2="534" stroke="#ccd6eb" stroke-width="1"/>
<line x1="553.1" x2="553.1" y1="527.5" y2="534" stroke="#ccd6eb" stroke-width="1"/>
<line x1="75" x2="554" y1="527.8" y2="527.8" stroke="#ccd6eb" stroke-width="1"/>
<rect x="80.7" y="507.9" width="10.4" height="19.6" fill="#ffff00" stroke="#4a4a3a" stroke-width="1"/>
<text transform="translate(87.9,537.6) rotate(-45)" text-anchor="end" font-size="7.5" letter-spacing="0.4" fill="#666">8 PM</text>
<rect x="100.6" y="508.8" width="10.4" height="18.7" fill="#ffff00" stroke="#4a4a3a" stroke-width="1"/>
<text transform="translate(107.8,537.6) rotate(-45)" text-anchor="end" font-size="7.5" letter-spacing="0.4" fill="#666">9 PM</text>
<rect x="120.5" y="511.4" width="10.4" height="16.1" fill="#ffff00" stroke="#4a4a3a" stroke-width="1"/>
<text transform="translate(127.7,537.6) rotate(-45)" text-anchor="end" font-size="7.5" letter-spacing="0.4" fill="#666">10 PM</text>
<rect x="140.4" y="510.6" width="10.4" height="16.9" fill="#ffff00" stroke="#4a4a3a" stroke-width="1"/>
<text transform="translate(147.6,537.6) rotate(-45)" text-anchor="end" font-size="7.5" letter-spacing="0.4" fill="#666">11 PM</text>
<rect x="160.3" y="511.5" width="10.4" height="16.0" fill="#ffff00" stroke="#4a4a3a" stroke-width="1"/>
<text transform="translate(167.5,537.6) rotate(-45)" text-anchor="end" font-size="7.5" letter-spacing="0.4" fill="#666">Nov 11, 2020 12 AM</text>
<rect x="180.2" y="511.5" width="10.4" height="16.0" fill="#ffff00" stroke="#4a4a3a" stroke-width="1"/>
<text transform="translate(187.4,537.6) rotate(-45)" text-anchor="end" font-size="7.5" letter-spacing="0.4" fill="#666">1 AM</text>
<rect x="200.1" y="514.5" width="10.4" height="13.0" fill="#ffff00" stroke="#4a4a3a" stroke-width="1"/>
<text transform="translate(207.3,537.6) rotate(-45)" text-anchor="end" font-size="7.5" letter-spacing="0.4" fill="#666">2 AM</text>
<rect x="220.0" y="518.5" width="10.4" height="9.0" fill="#00e400" stroke="#4a4a3a" stroke-width="1"/>
<text transform="translate(227.2,537.6) rotate(-45)" text-anchor="end" font-size="7.5" letter-spacing="0.4" fill="#666">3 AM</text>
<rect x="239.9" y="521.7" width="10.4" height="5.8" fill="#00e400" stroke="#4a4a3a" stroke-width="1"/>
<text transform="translate(247.1,537.6) rotate(-45)" text-anchor="end" font-size="7.5" letter-spacing="0.4" fill="#666">4 AM</text>
<rect x="259.8" y="523.4" width="10.4" height="4.1" fill="#00e400" stroke="#4a4a3a" stroke-width="1"/>
<text transform="translate(267.0,537.6) rotate(-45)" text-anchor="end" font-size="7.5" letter-spacing="0.4" fill="#666">5 AM</text>
<rect x="279.7" y="525.3" width="10.4" height="2.2" fill="#00e400" stroke="#4a4a3a" stroke-width="1"/>
<text transform="translate(286.9,537.6) rotate(-45)" text-anchor="end" font-size="7.5" letter-spacing="0.4" fill="#666">6 AM</text>
<rect x="299.6" y="527.5" width="10.4" height="0.5" fill="#00e400" stroke="#4a4a3a" stroke-width="1"/>
<text transform="translate(306.8,537.6) rotate(-45)" text-anchor="end" font-size="7.5" letter-spacing="0.4" fill="#666">7 AM</text>
<text transform="translate(326.7,537.6) rotate(-45)" text-anchor="end" font-size="7.5" letter-spacing="0.4" fill="#666">8 AM</text>
<rect x="339.4" y="526.7" width="10.4" height="0.8" fill="#00e400" stroke="#4a4a3a" stroke-width="1"/>
<text transform="translate(346.6,537.6) rotate(-45)" text-anchor="end" font-size="7.5" letter-spacing="0.4" fill="#666">9 AM</text>
<rect x="359.3" y="521.8" width="10.4" height="5.7" fill="#00e400" stroke="#4a4a3a" stroke-width="1"/>
<text transform="translate(366.5,537.6) rotate(-45)" text-anchor="end" font-size="7.5" letter-spacing="0.4" fill="#666">10 AM</text>
<rect x="379.2" y="516.6" width="10.4" height="10.9" fill="#00e400" stroke="#4a4a3a" stroke-width="1"/>
<text transform="translate(386.4,537.6) rotate(-45)" text-anchor="end" font-size="7.5" letter-spacing="0.4" fill="#666">11 AM</text>
<rect x="399.1" y="519.6" width="10.4" height="7.9" fill="#00e400" stroke="#4a4a3a" stroke-width="1"/>
<text transform="translate(406.3,537.6) rotate(-45)" text-anchor="end" font-size="7.5" letter-spacing="0.4" fill="#666">12 PM</text>
<rect x="419.0" y="506.0" width="10.4" height="21.5" fill="#ffff00" stroke="#4a4a3a" stroke-width="1"/>
<text transform="translate(426.2,537.6) rotate(-45)" text-anchor="end" font-size="7.5" letter-spacing="0.4" fill="#666">1 PM</text>
<rect x="438.9" y="507.7" width="10.4" height="19.8" fill="#ffff00" stroke="#4a4a3a" stroke-width="1"/>
<text transform="translate(446.1,537.6) rotate(-45)" text-anchor="end" font-size="7.5" letter-spacing="0.4" fill="#666">2 PM</text>
<rect x="458.8" y="509.8" width="10.4" height="17.7" fill="#ffff00" stroke="#4a4a3a" stroke-width="1"/>
<text transform="translate(466.0,537.6) rotate(-45)" text-anchor="end" font-size="7.5" letter-spacing="0.4" fill="#666">3 PM</text>
<rect x="478.7" y="510.7" width="10.4" height="16.8" fill="#ffff00" stroke="#4a4a3a" stroke-width="1"/>
<text transform="translate(485.9,537.6) rotate(-45)" text-anchor="end" font-size="7.5" letter-spacing="0.4" fill="#666">4 PM</text>
<rect x="498.6" y="511.7" width="10.4" height="15.8" fill="#ffff00" stroke="#4a4a3a" stroke-width="1"/>
<text transform="translate(505.8,537.6) rotate(-45)" text-anchor="end" font-size="7.5" letter-spacing="0.4" fill="#666">5 PM</text>
<rect x="518.5" y="510.1" width="10.4" height="17.4" fill="#ffff00" stroke="#4a4a3a" stroke-width="1"/>
<text transform="translate(525.7,537.6) rotate(-45)" text-anchor="end" font-size="7.5" letter-spacing="0.4" fill="#666">6 PM</text>
<rect x="538.4" y="504.7" width="10.4" height="22.8" fill="#ffff00" stroke="#4a4a3a" stroke-width="1"/>
<text transform="translate(545.6,537.6) rotate(-45)" text-anchor="end" font-size="7.5" letter-spacing="0.4" fill="#666">7 PM</text>
<text transform="translate(44.2,464) rotate(-90)" text-anchor="middle" font-size="8.5" fill="#111">AQI</text>
<text x="293" y="380.7" text-anchor="middle" font-size="12.75" fill="#333">Bishkek – PM2.5</text>
<rect x="278" y="605.5" width="11" height="8" fill="#ccc"/>
<text x="292" y="612.7" font-size="8.5" font-weight="bold" fill="#333">AQI</text>
</svg>
<div id="cc" class="abs">
<div id="cch"><div style="font-size:10px;padding-top:3px;line-height:14px">Current Conditions</div><div style="font-size:8px;line-height:14.5px">observed at</div><div style="font-size:10px;line-height:14px">Nov 11, 2020 7:00 PM (LT)</div></div>
<div id="ccy">97 AQI<br>Moderate<br>PM2.5</div>
<div id="hm">Health Message</div>
<div id="hmt">The AQI is between 51 and 100. Air quality is<br>acceptable; however, pollution in this range<br>may pose a moderate health concern for a<br>very small number of individuals. People<br>who are unusually sensitive to ozone or<br>particle pollution may experience respiratory<br>symptoms.</div>
</div>
</body></html>
